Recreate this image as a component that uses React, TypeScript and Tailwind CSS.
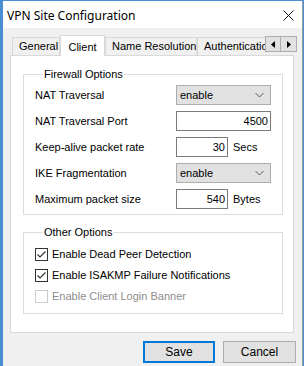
import React from "react";

const ui = { fontFamily: '"Liberation Sans", Arial, sans-serif' };
const title = { fontFamily: '"Noto Sans", "Open Sans", sans-serif' };

function Chevron() {
  return (
    <svg width="9" height="6" viewBox="0 0 9 6" className="block">
      <path d="M0.5 1 L4.5 5 L8.5 1" fill="none" stroke="#5a5a5a" strokeWidth="1" />
    </svg>
  );
}

function Select({ value }: { value: string }) {
  return (
    <div className="flex h-[20px] w-[95px] items-center justify-between border border-[#adadad] bg-[#e1e1e1] pl-[3px] pr-[6px] text-[11px] text-black">
      <span>{value}</span>
      <Chevron />
    </div>
  );
}

function Input({ value, w }: { value: string; w: string }) {
  return (
    <div className={`flex h-[20px] items-center justify-end border border-[#7a7a7a] bg-white pr-[2px] text-[11px] text-black ${w}`}>
      {value}
    </div>
  );
}

function Row({ label, children }: { label: string; children: React.ReactNode }) {
  return (
    <div className="flex h-[20px] items-center">
      <div className="w-[141px] text-[11px] text-black">{label}</div>
      <div className="flex items-center">{children}</div>
    </div>
  );
}

function Check({ checked, disabled, label }: { checked?: boolean; disabled?: boolean; label: string }) {
  return (
    <div className="flex h-[13px] items-center">
      <div
        className={`flex h-[13px] w-[13px] items-center justify-center border bg-white ${
          disabled ? "border-[#cccccc]" : "border-[#333333]"
        }`}
      >
        {checked && (
          <svg width="11" height="11" viewBox="0 0 11 11" className="block">
            <path d="M1.5 5.5 L4 8 L9.5 2.5" fill="none" stroke="#333333" strokeWidth="1.2" />
          </svg>
        )}
      </div>
      <span className={`ml-[4px] text-[11px] ${disabled ? "text-[#8d8d8d]" : "text-black"}`}>{label}</span>
    </div>
  );
}

function Tab({ label, w, selected, clip }: { label: string; w: string; selected?: boolean; clip?: boolean }) {
  if (selected) {
    return (
      <div
        className={`relative z-10 -mb-px flex h-[21px] items-start justify-center border border-b-0 border-[#d9d9d9] bg-white pt-[3px] text-[11px] text-black ${w}`}
      >
        {label}
      </div>
    );
  }
  return (
    <div
      className={`flex h-[18px] items-center overflow-hidden whitespace-nowrap border border-b-0 border-[#d9d9d9] bg-[#f0f0f0] pl-[6px] text-[11px] text-black ${
        clip ? "border-r-0" : ""
      } ${w}`}
    >
      {label}
    </div>
  );
}

export default function App() {
  return (
    <div className="h-[366px] w-[304px] overflow-hidden bg-[#4a8fd0] pl-[3px] pt-[1px]" style={ui}>
      <div className="h-[380px] w-[300px] border-r border-[#9a9a9a] bg-[#f0f0f0]">
        {/* title bar */}
        <div className="flex h-[27px] items-center justify-between bg-white pl-[4px] pr-[8px]">
          <span className="pt-[2px] text-[12px] text-black" style={title}>
            VPN Site Configuration
          </span>
          <svg width="11" height="11" viewBox="0 0 11 11" className="mt-[2px] block">
            <path d="M0.5 0.5 L10.5 10.5 M10.5 0.5 L0.5 10.5" stroke="#111" strokeWidth="1" />
          </svg>
        </div>

        {/* body */}
        <div className="pl-[7px] pt-[7px]">
          {/* tabs */}
          <div className="flex h-[20px] items-end">
            <div className="w-[2px]" />
            <Tab label="General" w="w-[48px]" />
            <Tab label="Client" w="w-[45px]" selected />
            <Tab label="Name Resolution" w="w-[92px]" />
            <Tab label="Authentication" w="w-[68px]" clip />
            <div className="mb-[3px] flex h-[16px] self-end">
              <div className="flex h-[16px] w-[16px] items-center justify-center border border-[#adadad] bg-[#e1e1e1]">
                <svg width="4" height="7" viewBox="0 0 4 7" className="block">
                  <path d="M4 0 L0 3.5 L4 7 Z" fill="#000" />
                </svg>
              </div>
              <div className="flex h-[16px] w-[16px] items-center justify-center border border-l-0 border-[#adadad] bg-[#e1e1e1]">
                <svg width="4" height="7" viewBox="0 0 4 7" className="block">
                  <path d="M0 0 L4 3.5 L0 7 Z" fill="#000" />
                </svg>
              </div>
            </div>
          </div>

          {/* panel */}
          <div className="h-[278px] w-[284px] border border-[#d9d9d9] bg-white pl-[12px] pr-[10px] pt-[12px]">
            <fieldset className="border border-[#dcdcdc] pb-[5px] pl-[11px] pr-[10px]">
              <legend className="ml-[8px] px-[1px] text-[11px] leading-[13px] text-black">Firewall Options</legend>
              <div className="flex flex-col gap-[6px] pt-[4px]">
                <Row label="NAT Traversal">
                  <Select value="enable" />
                </Row>
                <Row label="NAT Traversal Port">
                  <Input value="4500" w="w-[95px]" />
                </Row>
                <Row label="Keep-alive packet rate">
                  <Input value="30" w="w-[52px]" />
                  <span className="ml-[5px] text-[11px] text-black">Secs</span>
                </Row>
                <Row label="IKE Fragmentation">
                  <Select value="enable" />
                </Row>
                <Row label="Maximum packet size">
                  <Input value="540" w="w-[52px]" />
                  <span className="ml-[5px] text-[11px] text-black">Bytes</span>
                </Row>
              </div>
            </fieldset>

            <fieldset className="mt-[11px] border border-[#dcdcdc] pb-[10px] pl-[11px] pr-[10px]">
              <legend className="ml-[8px] px-[1px] text-[11px] leading-[13px] text-black">Other Options</legend>
              <div className="flex flex-col gap-[8px] pt-[9px]">
                <Check checked label="Enable Dead Peer Detection" />
                <Check checked label="Enable ISAKMP Failure Notifications" />
                <Check disabled label="Enable Client Login Banner" />
              </div>
            </fieldset>
          </div>

          {/* buttons */}
          <div className="flex w-[286px] justify-end gap-[8px] pt-[8px]">
            <div className="flex h-[22px] w-[72px] items-center justify-center border-2 border-[#0078d7] bg-[#e1e1e1] text-[12px] text-black">
              Save
            </div>
            <div className="flex h-[22px] w-[73px] items-center justify-center border border-[#adadad] bg-[#e1e1e1] text-[12px] text-black">
              Cancel
            </div>
          </div>
        </div>
      </div>
    </div>
  );
}
